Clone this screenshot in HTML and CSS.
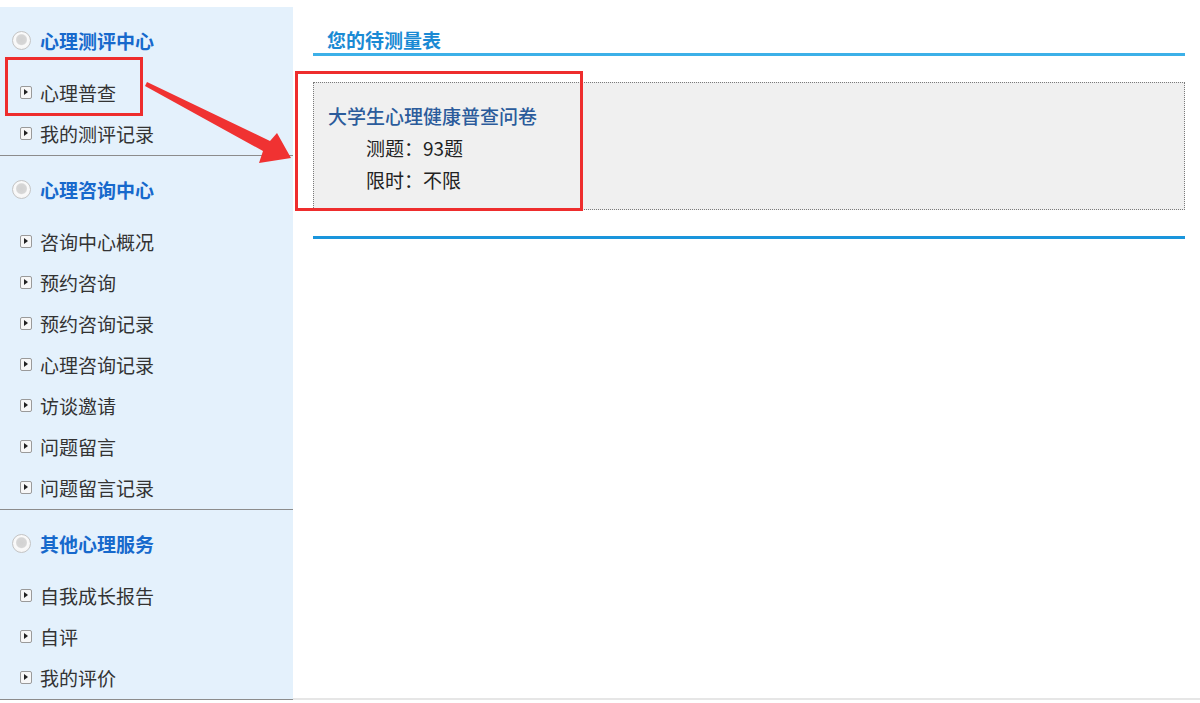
FILE: index.html
```html
<!DOCTYPE html>
<html lang="zh-CN">
<head>
    <meta charset="UTF-8">
    <meta name="viewport" content="width=device-width, initial-scale=1.0">
    <title>心理测评中心</title>
    <link rel="stylesheet" href="styles.css">
</head>
<body>

<div class="page">
    <div class="sidebar">
        <div class="menu-section">
            <div class="menu-title"><span class="dot"></span>心理测评中心</div>
            <ul class="menu-list">
                <li><span class="arrow-ico"></span>心理普查</li>
                <li><span class="arrow-ico"></span>我的测评记录</li>
            </ul>
        </div>
        <div class="menu-section">
            <div class="menu-title"><span class="dot"></span>心理咨询中心</div>
            <ul class="menu-list">
                <li><span class="arrow-ico"></span>咨询中心概况</li>
                <li><span class="arrow-ico"></span>预约咨询</li>
                <li><span class="arrow-ico"></span>预约咨询记录</li>
                <li><span class="arrow-ico"></span>心理咨询记录</li>
                <li><span class="arrow-ico"></span>访谈邀请</li>
                <li><span class="arrow-ico"></span>问题留言</li>
                <li><span class="arrow-ico"></span>问题留言记录</li>
            </ul>
        </div>
        <div class="menu-section">
            <div class="menu-title"><span class="dot"></span>其他心理服务</div>
            <ul class="menu-list">
                <li><span class="arrow-ico"></span>自我成长报告</li>
                <li><span class="arrow-ico"></span>自评</li>
                <li><span class="arrow-ico"></span>我的评价</li>
            </ul>
        </div>
    </div>

    <div class="main">
        <h2 class="main-title">您的待测量表</h2>
        <div class="scale-box">
            <div class="scale-name">大学生心理健康普查问卷</div>
            <div class="scale-info">测题：93题</div>
            <div class="scale-info">限时：不限</div>
        </div>
        <div class="main-rule"></div>
    </div>
</div>

<!-- 标注 -->
<div class="mark mark-left"></div>
<div class="mark mark-right"></div>
<svg class="mark-arrow" width="300" height="170" viewBox="0 0 300 170">
    <polygon points="147,82 270,141 277,133 291,158 259,163 263,151 145,86" fill="#f03232"/>
</svg>

</body>
</html>
```

FILE: styles.css
```css
body {
    margin: 0;
    font-family: "Noto Sans CJK SC", "Microsoft YaHei", sans-serif;
    background: #fff;
    color: #333;
    height: 703px;
    overflow: hidden;
}

.page {
    display: flex;
    align-items: flex-start;
    border-bottom: 2px solid #e6e6e6;
    height: 700px;
    box-sizing: border-box;
}

.sidebar {
    width: 293px;
    margin-top: 7px;
    background: #e4f1fc;
    flex-shrink: 0;
}

.menu-section {
    padding-top: 13px;
    border-bottom: 1px solid #8c8c8c;
}

.menu-title {
    display: flex;
    align-items: center;
    height: 40px;
    margin-bottom: 13px;
    padding-left: 12px;
    font-size: 19px;
    font-weight: bold;
    color: #1769cc;
}

.dot {
    width: 17px;
    height: 17px;
    border-radius: 50%;
    border: 1px solid #c4c4c4;
    background: radial-gradient(circle at 50% 45%, #d2d2d2 0, #d6d6d6 38%, #fafafa 48%, #f0f0f0 100%);
    margin-right: 9px;
}

.menu-list {
    list-style: none;
    margin: 0;
    padding: 0;
}

.menu-list li {
    display: flex;
    align-items: center;
    height: 41px;
    padding-left: 20px;
    padding-bottom: 2px;
    box-sizing: border-box;
    font-size: 19px;
    color: #333;
}

.arrow-ico {
    position: relative;
    width: 10px;
    height: 11px;
    border: 1px solid #9a9a9a;
    border-radius: 2px;
    background: #f7f7f7;
    margin-right: 8px;
}

.arrow-ico::after {
    content: "";
    position: absolute;
    left: 3px;
    top: 2px;
    border-left: 4px solid #222;
    border-top: 3.5px solid transparent;
    border-bottom: 3.5px solid transparent;
}

.main {
    flex: 1;
    padding: 0 15px 0 20px;
}

.main-title {
    margin: 0;
    padding: 27px 0 0 14px;
    line-height: 26px;
    font-size: 19px;
    font-weight: bold;
    color: #1a8ad4;
    border-bottom: 3px solid #3cb0e8;
}

.scale-box {
    margin-top: 26px;
    height: 128px;
    box-sizing: border-box;
    padding: 17px 14px 0;
    background: #f0f0f0;
    border: 1px dotted #7a7a7a;
}

.scale-name {
    line-height: 32px;
    font-size: 19px;
    color: #2b5b9b;
    font-weight: 500;
}

.scale-info {
    line-height: 32px;
    padding-left: 38px;
    font-size: 19px;
    color: #222;
}

.main-rule {
    margin-top: 26px;
    height: 3px;
    background: #1a95dc;
}

.mark {
    position: absolute;
    border: 3px solid #ee2d2d;
    box-sizing: border-box;
}

.mark-left {
    left: 5px;
    top: 57px;
    width: 138px;
    height: 59px;
}

.mark-right {
    left: 295px;
    top: 71px;
    width: 288px;
    height: 140px;
}

.mark-arrow {
    position: absolute;
    left: 0;
    top: 0;
}
```
